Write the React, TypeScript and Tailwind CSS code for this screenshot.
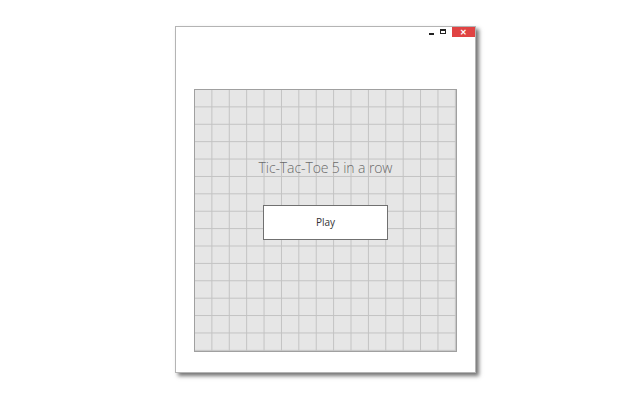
import React from 'react'

export default function App() {
  return (
    <div className="w-[640px] h-[400px] bg-white pl-[175px] pt-[26px] font-['Open_Sans',sans-serif]">
      {/* window */}
      <div className="w-[301px] h-[347px] bg-white border border-[#b4b4b4] shadow-[3px_3px_4px_rgba(0,0,0,0.55)] flex flex-col">
        {/* title bar */}
        <div className="h-[10px] flex justify-end items-start">
          <div className="w-[12px] h-[10px] flex items-end justify-center pb-[2px]">
            <div className="w-[5px] h-[2px] bg-[#222]" />
          </div>
          <div className="w-[12px] h-[10px] flex items-start justify-center pt-[2px] mr-[3px]">
            <div className="w-[6px] h-[5px] border border-[#222] border-t-2" />
          </div>
          <div className="w-[23px] h-[10px] bg-[#e04343] flex items-center justify-center text-white text-[8px] leading-none font-bold">
            ✕
          </div>
        </div>
        {/* board */}
        <div className="mt-[52px] ml-[18px] w-[263px] h-[263px] border border-[#a0a0a0] bg-[#e6e6e6] bg-[linear-gradient(to_right,#c2c2c2_1px,transparent_1px),linear-gradient(to_bottom,#c2c2c2_1px,transparent_1px)] bg-[size:17.4px_17.4px] bg-[position:-1px_-1px] flex flex-col items-center">
          <div className="mt-[66px] text-[14px] font-light text-[#6a6a6a] leading-[24px] tracking-[-0.1px]">
            Tic-Tac-Toe 5 in a row
          </div>
          <button className="mt-[25px] w-[125px] h-[35px] bg-white border border-[#707070] text-[10px] text-[#333] font-['Open_Sans',sans-serif]">
            Play
          </button>
        </div>
      </div>
    </div>
  )
}
